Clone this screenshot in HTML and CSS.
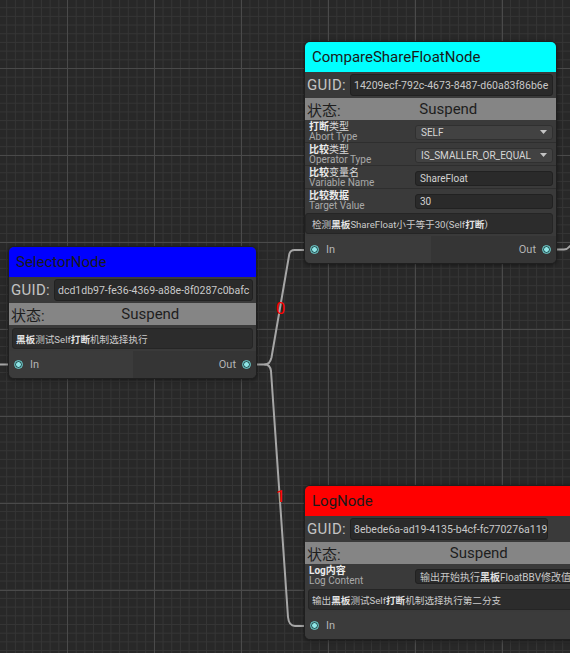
FILE: index.html
```html
<!DOCTYPE html>
<html lang="zh">
<head>
<meta charset="utf-8">
<title>Graph</title>
<link rel="stylesheet" href="styles.css">
</head>
<body>
<div class="canvas">
  <svg class="edges" width="570" height="653" viewBox="0 0 570 653">
    <g fill="none" stroke="#a6a6a6" stroke-width="2" stroke-linecap="round">
      <path d="M0 364.5 H13"/>
      <path d="M251 364.5 H265 C268.5 364.5 270.5 361.5 271.5 357.5 L289.3 254 C290 251.5 291.5 250 294.5 250 H309"/>
      <path d="M265 364.5 C268.5 364.5 270.5 367.5 271 371 L288 617 C288.6 623 290.5 626 295 626 H309"/>
      <path d="M551 249.5 H564 C567 249.5 568.5 248 570 246"/>
    </g>
    <text class="edge-label" x="280.5" y="313.5">0</text>
    <text class="edge-label" x="280.5" y="501.5">1</text>
  </svg>

  <div class="node node-compare">
    <div class="node-title title-cyan">CompareShareFloatNode</div>
    <div class="guid-row">
      <span class="guid-label">GUID:</span>
      <div class="field guid-field">14209ecf-792c-4673-8487-d60a83f86b6e</div>
    </div>
    <div class="status-row">
      <span class="status-label">状态:</span>
      <span class="status-value">Suspend</span>
    </div>
    <div class="props">
      <div class="prop">
        <div class="prop-label"><span class="zh"><b>打断</b>类型</span><span class="en">Abort Type</span></div>
        <div class="dropdown"><span>SELF</span><svg class="arrow" width="7" height="4" viewBox="0 0 7 4"><path d="M0 0 H7 L3.5 4 Z" fill="#c4c4c4"/></svg></div>
      </div>
      <div class="prop">
        <div class="prop-label"><span class="zh"><b>比较</b>类型</span><span class="en">Operator Type</span></div>
        <div class="dropdown"><span>IS_SMALLER_OR_EQUAL</span><svg class="arrow" width="7" height="4" viewBox="0 0 7 4"><path d="M0 0 H7 L3.5 4 Z" fill="#c4c4c4"/></svg></div>
      </div>
      <div class="prop">
        <div class="prop-label"><span class="zh"><b>比较</b>变量名</span><span class="en">Variable Name</span></div>
        <div class="field text-field">ShareFloat</div>
      </div>
      <div class="prop">
        <div class="prop-label"><span class="zh"><b>比较数据</b></span><span class="en">Target Value</span></div>
        <div class="field text-field">30</div>
      </div>
    </div>
    <div class="desc desc-tight">检测<b>黑板</b>ShareFloat小于等于30(Self<b>打断</b>)</div>
    <div class="ports">
      <div class="port-in"><span class="port"></span><span>In</span></div>
      <div class="port-out"><span>Out</span><span class="port"></span></div>
    </div>
  </div>

  <div class="node node-selector">
    <div class="node-title title-blue">SelectorNode</div>
    <div class="guid-row">
      <span class="guid-label">GUID:</span>
      <div class="field guid-field">dcd1db97-fe36-4369-a88e-8f0287c0bafc</div>
    </div>
    <div class="status-row">
      <span class="status-label">状态:</span>
      <span class="status-value">Suspend</span>
    </div>
    <div class="desc"><b>黑板</b>测试Self<b>打断</b>机制选择执行</div>
    <div class="ports">
      <div class="port-in"><span class="port"></span><span>In</span></div>
      <div class="port-out"><span>Out</span><span class="port"></span></div>
    </div>
  </div>

  <div class="node node-log">
    <div class="node-title title-red">LogNode</div>
    <div class="guid-row">
      <span class="guid-label">GUID:</span>
      <div class="field guid-field guid-short">8ebede6a-ad19-4135-b4cf-fc770276a119</div>
    </div>
    <div class="status-row">
      <span class="status-label">状态:</span>
      <span class="status-value">Suspend</span>
    </div>
    <div class="props">
      <div class="prop">
        <div class="prop-label"><span class="zh"><b>Log内容</b></span><span class="en">Log Content</span></div>
        <div class="field text-field log-field">输出开始执行<b>黑板</b>FloatBBV修改值小于等于30</div>
      </div>
    </div>
    <div class="desc">输出<b>黑板</b>测试Self<b>打断</b>机制选择执行第二分支</div>
    <div class="ports">
      <div class="port-in"><span class="port"></span><span>In</span></div>
    </div>
  </div>
</div>
</body>
</html>
```

FILE: styles.css
```css
html, body {
  margin: 0;
  padding: 0;
  background: #282828;
  overflow: hidden;
}

.canvas {
  position: relative;
  width: 570px;
  height: 653px;
  overflow: hidden;
  font-family: "Roboto", "Noto Sans CJK SC", sans-serif;
  background-color: #282828;
  background-image:
    linear-gradient(to right, #4a4a4a 1px, transparent 1px),
    linear-gradient(to bottom, #4a4a4a 1px, transparent 1px),
    linear-gradient(to right, #353535 1px, transparent 1px),
    linear-gradient(to bottom, #353535 1px, transparent 1px);
  background-size: 87px 87px, 87px 87px, 8.7px 8.7px, 8.7px 8.7px;
  background-position: 67px 68px, 67px 68px, 67px 68px, 67px 68px;
}

.edges {
  position: absolute;
  left: 0;
  top: 0;
}

.edge-label {
  fill: #ff0000;
  font-family: "Roboto", sans-serif;
  font-size: 17px;
  text-anchor: middle;
}

.node {
  position: absolute;
  display: flex;
  flex-direction: column;
  background: #3a3a3a;
  border: 1px solid #1f1f1f;
  border-radius: 6px;
  overflow: hidden;
  box-shadow: 0 1px 4px rgba(0, 0, 0, 0.45);
}

.node-compare { left: 304px; top: 41px; width: 251px; }
.node-selector { left: 8px; top: 246px; width: 247px; }
.node-log { left: 304px; top: 485px; width: 312px; }

.node-title {
  height: 30px;
  line-height: 31px;
  padding-left: 7px;
  font-size: 15px;
  color: #1a1a1a;
}
.title-cyan { background: #00ffff; }
.title-blue { background: #0000ff; }
.title-red { background: #ff0000; }

.guid-row {
  height: 26px;
  display: flex;
  align-items: center;
  padding: 0 3px 0 2px;
}
.guid-label {
  flex: 0 0 auto;
  font-size: 15px;
  letter-spacing: 0.3px;
  color: #c4c4c4;
}

.field {
  box-sizing: border-box;
  background: #2a2a2a;
  border: 1px solid #212121;
  border-radius: 3px;
  color: #d2d2d2;
  font-size: 10px;
  white-space: nowrap;
  overflow: hidden;
  display: flex;
  align-items: center;
}

.guid-field {
  flex: 1;
  min-width: 0;
  height: 22px;
  margin-left: 4px;
  padding-left: 3px;
  font-size: 10.5px;
  color: #c9c9c9;
}
.guid-short {
  flex: 0 0 198px;
}

.status-row {
  height: 22px;
  display: flex;
  align-items: center;
  background: #858585;
  padding-left: 2px;
}
.status-label {
  font-size: 15px;
  color: #1e1e1e;
}
.status-value {
  flex: 1;
  text-align: center;
  font-size: 15px;
  color: #1e1e1e;
}

.props {
  display: flex;
  flex-direction: column;
}
.prop {
  height: 22px;
  display: flex;
  align-items: center;
  padding: 0 3px 0 4px;
  border-bottom: 1px solid #2e2e2e;
}
.prop:last-child {
  border-bottom: 0;
}
.prop-label {
  flex: 0 0 106px;
  display: flex;
  flex-direction: column;
  font-size: 10px;
  line-height: 9px;
  margin-top: 0;
  white-space: nowrap;
}
.prop-label .zh {
  color: #d8d8d8;
}
.prop-label .zh b {
  font-weight: bold;
  color: #ececec;
}
.prop-label .en {
  color: #a9a9a9;
  margin-top: 1px;
}

.dropdown {
  box-sizing: border-box;
  flex: 1;
  min-width: 0;
  height: 15px;
  display: flex;
  align-items: center;
  justify-content: space-between;
  padding: 0 5px 0 5px;
  background: #424242;
  border: 1px solid #303030;
  border-radius: 3px;
  color: #d6d6d6;
  font-size: 10px;
  margin-top: 2px;
  white-space: nowrap;
}
.arrow {
  display: block;
  flex: 0 0 auto;
}

.text-field {
  flex: 1;
  min-width: 0;
  height: 15px;
  padding-left: 4px;
  margin-top: 2px;
}
.log-field {
  flex: 0 0 auto;
  width: 200px;
  margin-right: -4px;
  color: #c8c8c8;
}
.log-field b {
  font-weight: bold;
  color: #e0e0e0;
}

.desc {
  box-sizing: border-box;
  height: 21px;
  margin: 3px 3px 2px 3px;
  padding-left: 3px;
  display: flex;
  align-items: center;
  background: #2c2c2c;
  border: 1px solid #252525;
  border-radius: 3px;
  font-size: 9.6px;
  color: #cbcbcb;
  white-space: nowrap;
  overflow: hidden;
}
.desc-tight {
  margin-top: 2px;
  margin-left: 0;
  padding-left: 6px;
}
.desc b {
  font-weight: bold;
  color: #e2e2e2;
}

.ports {
  height: 27px;
  display: flex;
}
.port-in, .port-out {
  flex: 1;
  display: flex;
  align-items: center;
  font-size: 11px;
  color: #b4b4b4;
}
.port-in {
  background: #3b3b3b;
  padding-left: 5px;
  gap: 7px;
}
.port-out {
  background: #353535;
  justify-content: flex-end;
  padding-right: 5px;
  gap: 6px;
}
.port {
  box-sizing: border-box;
  width: 9px;
  height: 9px;
  border-radius: 50%;
  border: 1.5px solid #6fcfcf;
  background: radial-gradient(circle, #8fe6e6 0 2px, #2f5a5c 2.6px);
}
```
